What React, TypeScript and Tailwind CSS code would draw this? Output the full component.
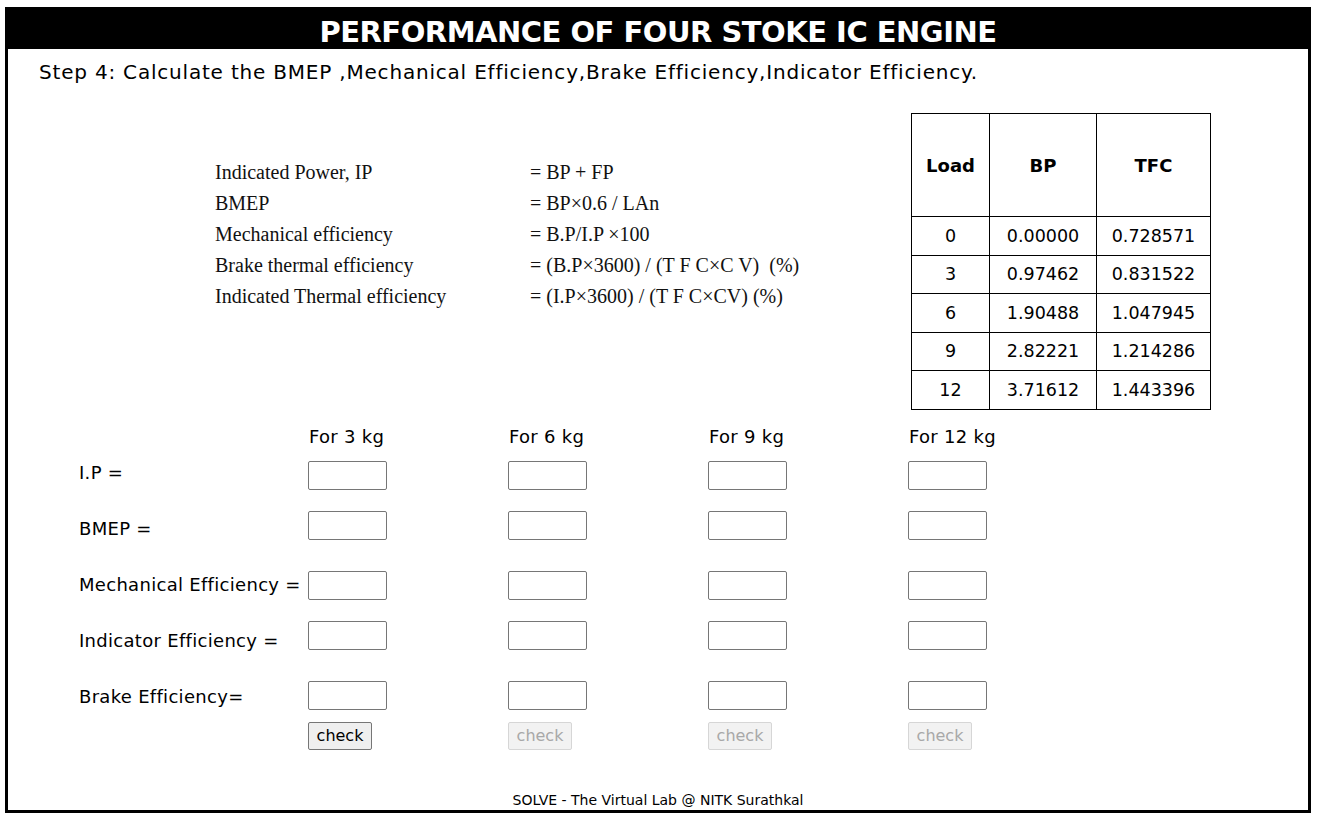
import React from 'react';

const comic = { fontFamily: '"Comic Sans MS", "DejaVu Sans", sans-serif' };

const formulas: [string, string][] = [
  ['Indicated Power, IP', '= BP + FP'],
  ['BMEP', '= BP×0.6 / LAn'],
  ['Mechanical efficiency', '= B.P/I.P ×100'],
  ['Brake thermal efficiency', '= (B.P×3600) / (T F C×C V)  (%)'],
  ['Indicated Thermal efficiency', '= (I.P×3600) / (T F C×CV) (%)'],
];

const tableRows = [
  ['0', '0.00000', '0.728571'],
  ['3', '0.97462', '0.831522'],
  ['6', '1.90488', '1.047945'],
  ['9', '2.82221', '1.214286'],
  ['12', '3.71612', '1.443396'],
];

const loads = ['For 3 kg', 'For 6 kg', 'For 9 kg', 'For 12 kg'];

// label nudge matches the slightly uneven baseline in the original page
const fields = [
  { label: 'I.P =', mt: 'mt-[12px]', nudge: 'pb-[4px]' },
  { label: 'BMEP =', mt: 'mt-[21px]', nudge: 'pt-[7px]' },
  { label: 'Mechanical Efficiency =', mt: 'mt-[31px]', nudge: 'pt-0' },
  { label: 'Indicator Efficiency =', mt: 'mt-[21px]', nudge: 'pt-[11px]' },
  { label: 'Brake Efficiency=', mt: 'mt-[31px]', nudge: 'pt-[3px]' },
];

const FieldRow = ({ label, mt, nudge }: { label: string; mt: string; nudge: string }) => (
  <div className={`flex h-[29px] items-center ${mt}`}>
    <div className={`w-[229px] shrink-0 text-[18px] leading-[24px] tracking-[0.3px] text-black ${nudge}`}>
      {label}
    </div>
    {loads.map((l) => (
      <div key={l} className="w-[200px] shrink-0">
        <input
          type="text"
          className="block h-[29px] w-[79px] rounded-[2px] border border-[#767676] bg-white px-1"
        />
      </div>
    ))}
  </div>
);

export default function App() {
  return (
    <div className="min-h-screen bg-white pl-[5px] pt-[7px]">
      <div
        className="flex h-[806px] w-[1306px] flex-col border-[3px] border-t-0 border-black"
        style={comic}
      >
        <div className="-mx-[3px] flex h-[42px] items-center justify-center bg-black pt-[8px]">
          <h1 className="text-[29px] font-bold leading-none tracking-[-0.5px] text-white">
            PERFORMANCE OF FOUR STOKE IC ENGINE
          </h1>
        </div>

        <div className="mt-[9px] pl-[31px] text-[20px] leading-[28px] tracking-[0.8px] text-black">
          Step 4: Calculate the BMEP ,Mechanical Efficiency,Brake Efficiency,Indicator Efficiency.
        </div>

        <div className="mt-[27px] flex">
          <div
            className="ml-[207px] mt-[43px] text-[20px] text-[#111]"
            style={{ fontFamily: '"Liberation Serif", "Times New Roman", serif' }}
          >
            {formulas.map(([a, b]) => (
              <div key={a} className="flex h-[31px] items-center whitespace-pre">
                <span className="w-[315px]">{a}</span>
                <span>{b}</span>
              </div>
            ))}
          </div>

          <table
            className="ml-auto mr-[97px] border-collapse text-center text-[17.5px] text-black"
            style={{ fontFamily: '"DejaVu Sans", Verdana, sans-serif' }}
          >
            <thead>
              <tr className="h-[103px]">
                <th className="w-[78px] border border-black text-[18px] font-bold">Load</th>
                <th className="w-[107px] border border-black text-[18px] font-bold">BP</th>
                <th className="w-[114px] border border-black text-[18px] font-bold">TFC</th>
              </tr>
            </thead>
            <tbody>
              {tableRows.map((r) => (
                <tr key={r[0]} className="h-[38.5px]">
                  {r.map((c, i) => (
                    <td key={i} className="border border-black">
                      {c}
                    </td>
                  ))}
                </tr>
              ))}
            </tbody>
          </table>
        </div>

        <div className="mt-[15px] pl-[71px]">
          <div className="flex h-[24px] items-center">
            <div className="w-[229px] shrink-0" />
            {loads.map((l) => (
              <div key={l} className="w-[200px] shrink-0 pl-px text-[18px] tracking-[0.3px] text-black">
                {l}
              </div>
            ))}
          </div>

          {fields.map((f) => (
            <FieldRow key={f.label} label={f.label} mt={f.mt} nudge={f.nudge} />
          ))}

          <div className="mt-[12px] flex">
            <div className="w-[229px] shrink-0" />
            {loads.map((l, i) => (
              <div key={l} className="w-[200px] shrink-0">
                <button
                  disabled={i > 0}
                  className={
                    i === 0
                      ? 'h-[28px] w-[64px] rounded-[2px] border border-[#767676] bg-[#efefef] text-[16px] text-black'
                      : 'h-[28px] w-[64px] rounded-[2px] border border-[#d6d6d6] bg-[#f2f2f2] text-[16px] text-[#a8a8a8]'
                  }
                >
                  check
                </button>
              </div>
            ))}
          </div>
        </div>

        <div className="mt-auto pb-px text-center text-[14px] leading-[18px] text-black">
          SOLVE - The Virtual Lab @ NITK Surathkal
        </div>
      </div>
    </div>
  );
}
